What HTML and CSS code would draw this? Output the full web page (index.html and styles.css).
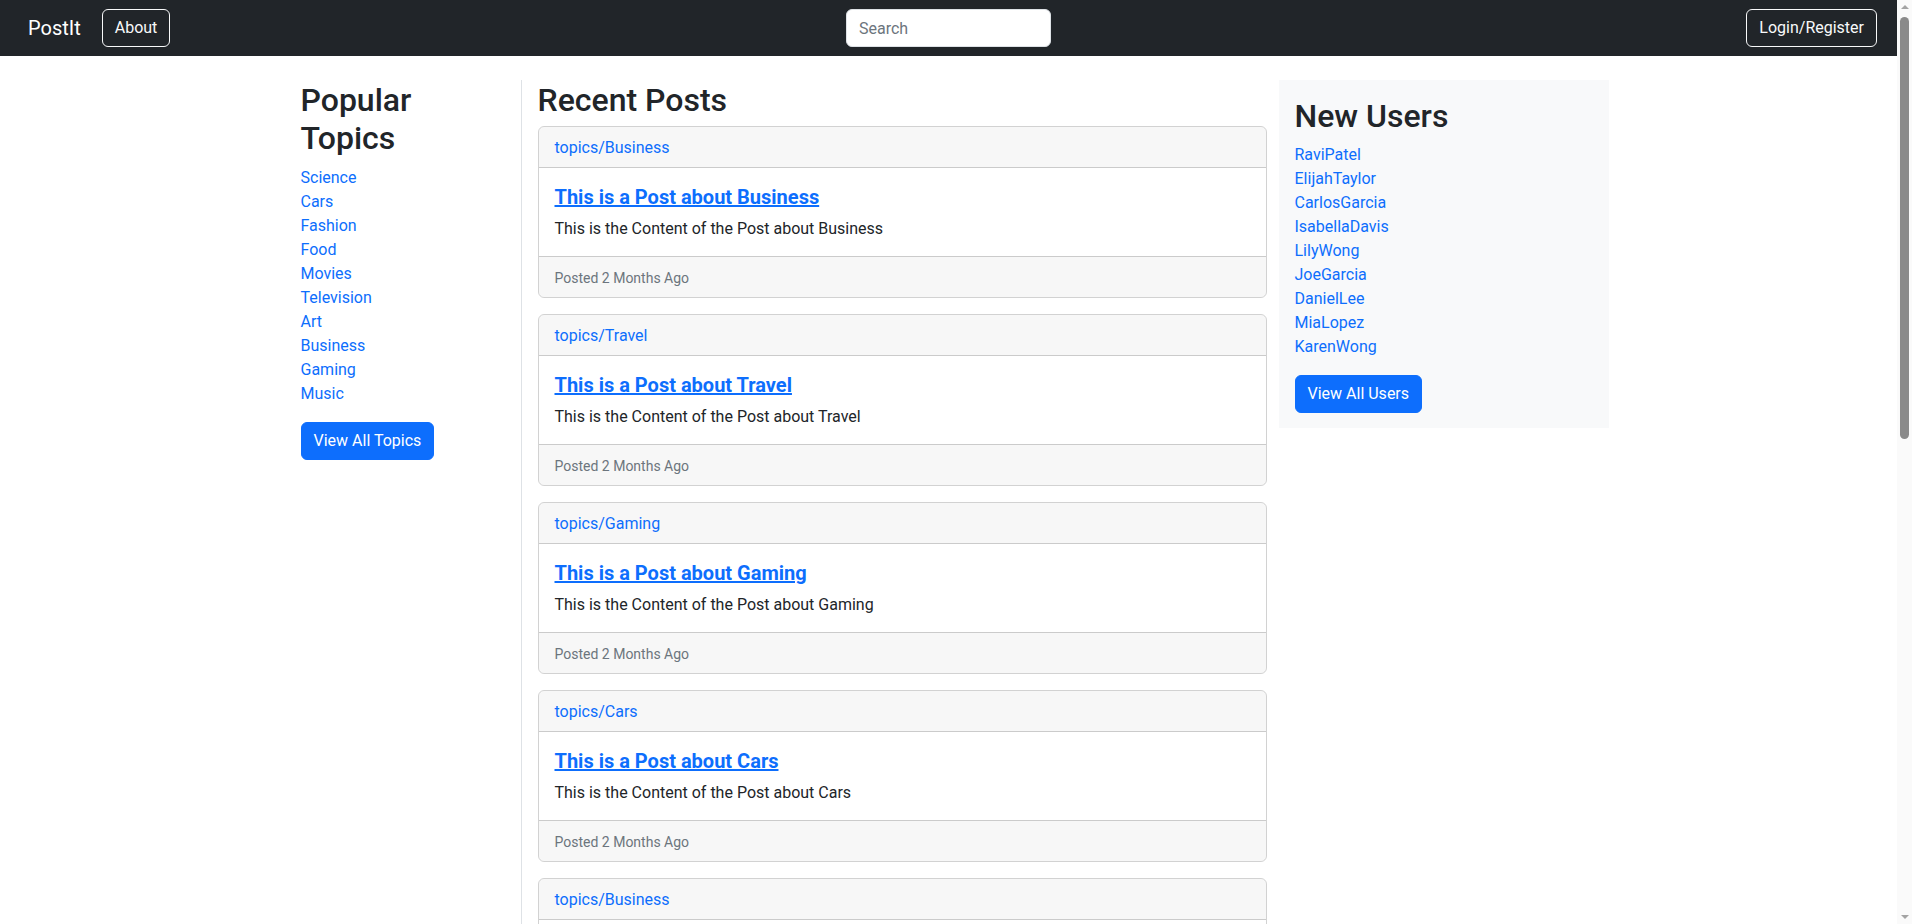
FILE: index.html
```html
<!DOCTYPE html>
<html lang="en">
<head>
<meta charset="utf-8">
<title>PostIt</title>
<link rel="stylesheet" href="styles.css">
</head>
<body>
<div class="page">
<nav class="navbar">
  <div class="nav-left">
    <a class="brand" href="#">PostIt</a>
    <a class="btn btn-outline" href="#">About</a>
  </div>
  <div class="nav-center">
    <input class="search" type="text" placeholder="Search">
  </div>
  <div class="nav-right">
    <a class="btn btn-outline btn-login" href="#">Login/Register</a>
  </div>
</nav>

<main class="container">
  <aside class="col-left">
    <h2 class="heading">Popular Topics</h2>
    <ul class="link-list">
      <li><a href="#">Science</a></li>
      <li><a href="#">Cars</a></li>
      <li><a href="#">Fashion</a></li>
      <li><a href="#">Food</a></li>
      <li><a href="#">Movies</a></li>
      <li><a href="#">Television</a></li>
      <li><a href="#">Art</a></li>
      <li><a href="#">Business</a></li>
      <li><a href="#">Gaming</a></li>
      <li><a href="#">Music</a></li>
    </ul>
    <a class="btn btn-primary" href="#">View All Topics</a>
  </aside>

  <section class="col-middle">
    <div class="posts">
      <h2 class="heading">Recent Posts</h2>

      <article class="card">
        <div class="card-header"><a href="#">topics/Business</a></div>
        <div class="card-body">
          <a class="post-title" href="#">This is a Post about Business</a>
          <p class="post-text">This is the Content of the Post about Business</p>
        </div>
        <div class="card-footer">Posted 2 Months Ago</div>
      </article>

      <article class="card">
        <div class="card-header"><a href="#">topics/Travel</a></div>
        <div class="card-body">
          <a class="post-title" href="#">This is a Post about Travel</a>
          <p class="post-text">This is the Content of the Post about Travel</p>
        </div>
        <div class="card-footer">Posted 2 Months Ago</div>
      </article>

      <article class="card">
        <div class="card-header"><a href="#">topics/Gaming</a></div>
        <div class="card-body">
          <a class="post-title" href="#">This is a Post about Gaming</a>
          <p class="post-text">This is the Content of the Post about Gaming</p>
        </div>
        <div class="card-footer">Posted 2 Months Ago</div>
      </article>

      <article class="card">
        <div class="card-header"><a href="#">topics/Cars</a></div>
        <div class="card-body">
          <a class="post-title" href="#">This is a Post about Cars</a>
          <p class="post-text">This is the Content of the Post about Cars</p>
        </div>
        <div class="card-footer">Posted 2 Months Ago</div>
      </article>

      <article class="card">
        <div class="card-header"><a href="#">topics/Business</a></div>
        <div class="card-body">
          <a class="post-title" href="#">This is a Post about Business</a>
          <p class="post-text">This is the Content of the Post about Business</p>
        </div>
        <div class="card-footer">Posted 2 Months Ago</div>
      </article>

      <article class="card">
        <div class="card-header"><a href="#">topics/Music</a></div>
        <div class="card-body">
          <a class="post-title" href="#">This is a Post about Music</a>
          <p class="post-text">This is the Content of the Post about Music</p>
        </div>
        <div class="card-footer">Posted 2 Months Ago</div>
      </article>
    </div>
  </section>

  <aside class="col-right">
    <h2 class="heading">New Users</h2>
    <ul class="link-list">
      <li><a href="#">RaviPatel</a></li>
      <li><a href="#">ElijahTaylor</a></li>
      <li><a href="#">CarlosGarcia</a></li>
      <li><a href="#">IsabellaDavis</a></li>
      <li><a href="#">LilyWong</a></li>
      <li><a href="#">JoeGarcia</a></li>
      <li><a href="#">DanielLee</a></li>
      <li><a href="#">MiaLopez</a></li>
      <li><a href="#">KarenWong</a></li>
    </ul>
    <a class="btn btn-primary" href="#">View All Users</a>
  </aside>
</main>
</div>

<div class="scrollbar" aria-hidden="true">
  <span class="sb-arrow sb-up"></span>
  <span class="sb-thumb"></span>
  <span class="sb-arrow sb-down"></span>
</div>
</body>
</html>
```

FILE: styles.css
```css
* { box-sizing: border-box; }

html, body {
  margin: 0;
  padding: 0;
}

body {
  font-family: "Segoe UI", Roboto, "Liberation Sans", sans-serif;
  font-size: 16px;
  line-height: 1.5;
  color: #212529;
  background: #fff;
}

.page {
  margin-right: 15px;
}

a {
  color: #0d6efd;
  text-decoration: none;
}

/* Simulated browser scrollbar */
.scrollbar {
  position: fixed;
  top: 0;
  right: 0;
  bottom: 0;
  width: 15px;
  background: #fafafa;
  display: flex;
  flex-direction: column;
  align-items: center;
}

.sb-arrow {
  width: 0;
  height: 0;
  border-left: 4px solid transparent;
  border-right: 4px solid transparent;
  flex: none;
}

.sb-up {
  margin-top: 5px;
  border-bottom: 4px solid #a3a3a3;
}

.sb-down {
  margin-top: auto;
  margin-bottom: 5px;
  border-top: 4px solid #a3a3a3;
}

.sb-thumb {
  margin-top: 8px;
  width: 9px;
  height: 422px;
  border-radius: 5px;
  background: #8a8a8a;
  flex: none;
}

/* Navbar */
.navbar {
  background: #212529;
  height: 56px;
  padding: 8px 20px;
  display: grid;
  grid-template-columns: 1fr auto 1fr;
  align-items: center;
}

.nav-left {
  display: flex;
  align-items: center;
  padding-left: 8px;
}

.nav-right {
  display: flex;
  justify-content: flex-end;
}

.brand {
  color: #fff;
  font-size: 20px;
  line-height: 30px;
  padding: 5px 0;
  margin-right: 21px;
}

.btn {
  display: inline-block;
  font-size: 16px;
  line-height: 24px;
  padding: 6px 12px;
  border: 1px solid transparent;
  border-radius: 6px;
  white-space: nowrap;
}

.btn-outline {
  color: #f8f9fa;
  border-color: #f8f9fa;
}

.btn-login {
  min-width: 127px;
  text-align: center;
}

.btn-primary {
  color: #fff;
  background: #0d6efd;
  border-color: #0d6efd;
}

.search {
  width: 205px;
  height: 38px;
  padding: 6px 12px;
  font-family: inherit;
  font-size: 16px;
  line-height: 24px;
  color: #212529;
  background: #fff;
  border: 1px solid #dee2e6;
  border-radius: 6px;
  outline: none;
}

.search::placeholder {
  color: #6c757d;
}

/* Layout */
.container {
  width: 1320px;
  margin: 24px auto 0;
  display: flex;
  align-items: flex-start;
}

.col-left {
  width: 220px;
  padding: 1px 12px 0;
  flex: none;
}

.col-middle {
  width: 770px;
  padding: 0 12px;
  flex: none;
}

.posts {
  border-left: 1px solid #dee2e6;
  padding-left: 16px;
}

.col-right {
  width: 330px;
  flex: none;
  background: #f8f9fa;
  padding: 17px 16px 15px;
}

.heading {
  font-size: 32px;
  font-weight: 500;
  line-height: 1.2;
  margin: 0 0 8px;
}

.posts .heading {
  padding-top: 1px;
  margin-bottom: 7px;
}

.link-list {
  list-style: none;
  margin: 0 0 16px;
  padding: 0;
}

/* Cards */
.card {
  border: 1px solid rgba(0, 0, 0, 0.175);
  border-radius: 6px;
  margin-bottom: 16px;
  overflow: hidden;
}

.card-header {
  padding: 9px 16px 7px;
  background: rgba(0, 0, 0, 0.03);
  border-bottom: 1px solid rgba(0, 0, 0, 0.175);
}

.card-body {
  padding: 17px 16px 15px;
}

.post-title {
  display: block;
  font-size: 20px;
  font-weight: 700;
  line-height: 24px;
  text-decoration: underline;
  margin-bottom: 8px;
}

.post-text {
  margin: 0;
}

.card-footer {
  padding: 9px 16px 7px;
  background: rgba(0, 0, 0, 0.03);
  border-top: 1px solid rgba(0, 0, 0, 0.175);
  font-size: 14px;
  line-height: 24px;
  color: #6c757d;
}
```
